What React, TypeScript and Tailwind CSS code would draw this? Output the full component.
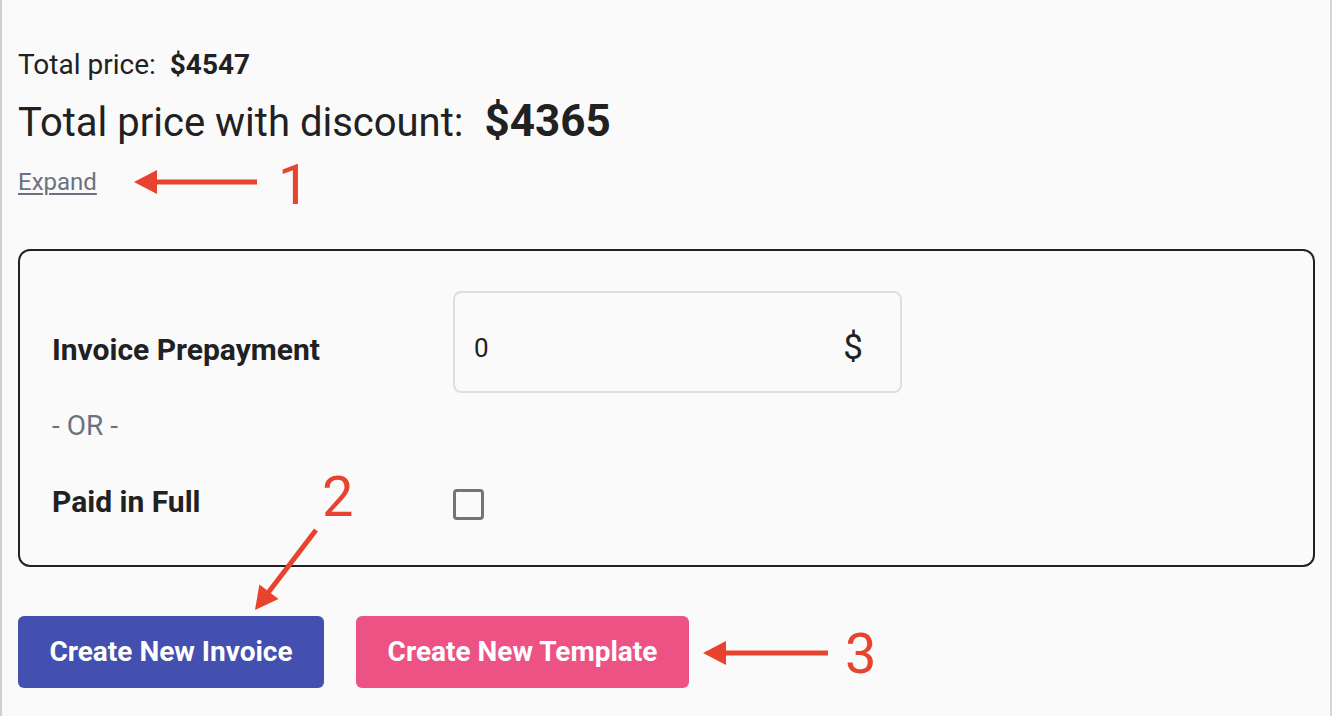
import React from 'react';

const RED = '#e8432e';

// red annotation arrow drawn over the page, tip at (x2, y2)
function Arrow({ x1, y1, x2, y2 }: { x1: number; y1: number; x2: number; y2: number }) {
  const a = Math.atan2(y2 - y1, x2 - x1);
  const L = 23;
  const W = 12;
  const ux = Math.cos(a);
  const uy = Math.sin(a);
  const bx = x2 - L * ux;
  const by = y2 - L * uy;
  const p1 = `${bx - W * uy},${by + W * ux}`;
  const p2 = `${bx + W * uy},${by - W * ux}`;
  return (
    <svg className="pointer-events-none absolute left-0 top-0" width="1332" height="716" viewBox="0 0 1332 716">
      <line x1={x1} y1={y1} x2={bx + 2 * ux} y2={by + 2 * uy} stroke={RED} strokeWidth="5" />
      <polygon points={`${x2},${y2} ${p1} ${p2}`} fill={RED} />
    </svg>
  );
}

export default function App() {
  return (
    <div
      className="relative h-[716px] w-[1332px] overflow-hidden border-l-2 border-r-2 border-l-[#c9d1d1] border-r-[#d6d6d6] bg-[#fafafa] text-[#212121]"
      style={{ fontFamily: 'Roboto, "Noto Sans", sans-serif' }}
    >
      <div className="pl-4 pr-[15px] pt-[48px]">
        <div className="flex items-baseline text-[28px] leading-[34px]">
          <span>Total price:</span>
          <span className="ml-[14px] font-bold">$4547</span>
        </div>
        <div className="mt-[13px] flex items-baseline leading-[52px]">
          <span className="text-[40px]">Total price with discount:</span>
          <span className="ml-[21px] text-[44px] font-bold">$4365</span>
        </div>
        <div className="mt-[16px] h-[34px]">
          <a className="text-[24px] leading-[34px] text-[#6b7280] underline decoration-[1.5px] underline-offset-[3px]">Expand</a>
        </div>

        <div className="mt-[50px] h-[318px] rounded-[12px] border-2 border-[#222] px-[32px] pt-[40px]">
          <div className="flex items-start">
            <div className="mt-[39px] w-[401px] text-[30px] font-bold leading-[40px]">Invoice Prepayment</div>
            <div className="flex h-[102px] w-[449px] items-center justify-between rounded-[8px] border-2 border-[#dedede] pl-[19px] pr-[37px] pt-[12px]">
              <span className="text-[26px]">0</span>
              <span className="text-[35px] leading-[40px]">$</span>
            </div>
          </div>
          <div className="mt-[13px] text-[28px] leading-[40px] text-[#6b7280]">- OR -</div>
          <div className="mt-[36px] flex items-start">
            <div className="w-[401px] text-[30px] font-bold leading-[40px]">Paid in Full</div>
            <div className="mt-[7px] h-[31px] w-[31px] rounded-[4px] border-[3px] border-[#757575]" />
          </div>
        </div>

        <div className="mt-[49px] flex gap-8">
          <button className="h-[72px] w-[306px] rounded-[6px] bg-[#4350af] text-[28px] font-bold text-white">
            Create New Invoice
          </button>
          <button className="h-[72px] w-[333px] rounded-[6px] bg-[#ec5384] text-[28px] font-bold text-white">
            Create New Template
          </button>
        </div>
      </div>

      <Arrow x1={255} y1={182} x2={132} y2={182} />
      <Arrow x1={314} y1={530} x2={253} y2={610} />
      <Arrow x1={826} y1={653} x2={701} y2={653} />

      <span className="absolute left-[276px] top-[150px] text-[56px] leading-[70px] text-[#e8432e]">1</span>
      <span className="absolute left-[320px] top-[462px] text-[56px] leading-[70px] text-[#e8432e]">2</span>
      <span className="absolute left-[843px] top-[619px] text-[56px] leading-[70px] text-[#e8432e]">3</span>
    </div>
  );
}
